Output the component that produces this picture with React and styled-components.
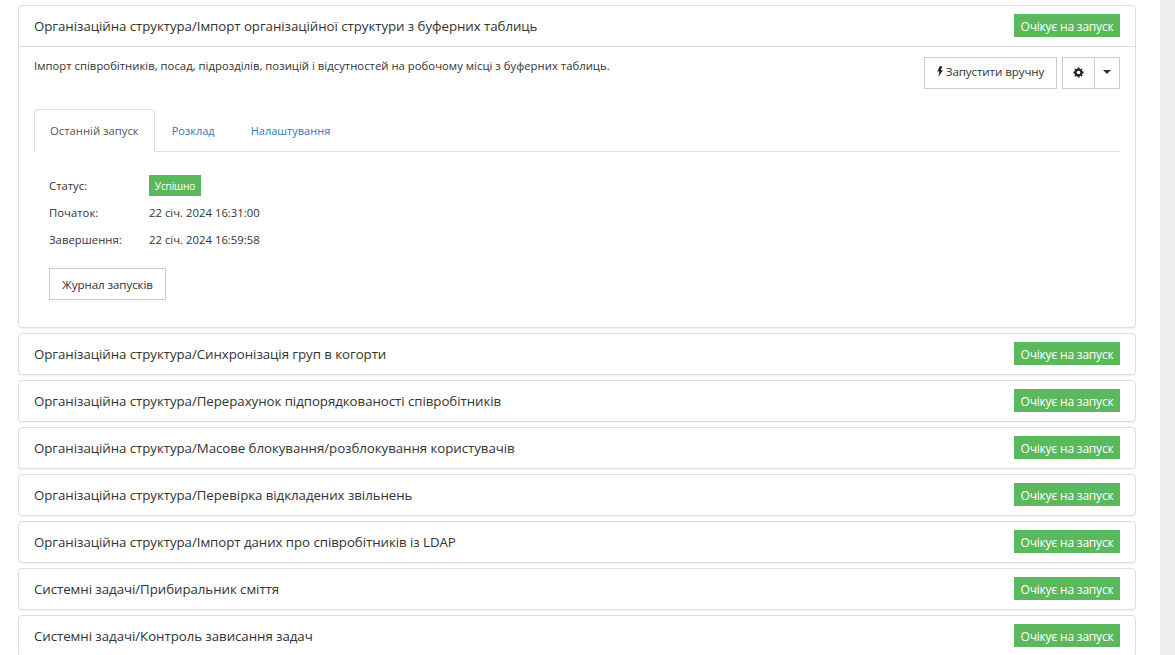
import React from "react";
import styled, { createGlobalStyle } from "styled-components";

const Global = createGlobalStyle`
  html, body { margin: 0; padding: 0; height: 100%; overflow: hidden; background: #fff; }
  body { font-family: "Open Sans", "Noto Sans", sans-serif; color: #333; }
  * { box-sizing: border-box; }
`;

const Page = styled.div`
  display: flex;
  width: 1175px;
  height: 655px;
  overflow: hidden;
`;
const Content = styled.main`
  width: 1160px;
  flex: none;
  padding: 5px 24px 0 18px;
  display: flex;
  flex-direction: column;
  gap: 5px;
`;
const Track = styled.div`
  width: 15px;
  flex: none;
  background: #ededed;
`;
const Panel = styled.section`
  flex: none;
  border: 1px solid #ddd;
  border-radius: 4px;
  background: #fff;
  box-shadow: 0 1px 1px rgba(0, 0, 0, 0.05);
`;
const Head = styled.header`
  height: ${(p) => (p.$open ? 41 : 40)}px;
  padding: 8px 15px 0;
  display: flex;
  align-items: flex-start;
  justify-content: space-between;
  border-bottom: ${(p) => (p.$open ? "1px solid #ddd" : "0")};
`;
const Title = styled.h3`
  margin: 3px 0 0;
  font-size: 13.3px;
  font-weight: 400;
  line-height: 18px;
  letter-spacing: -0.06px;
`;
const Badge = styled.span`
  display: inline-flex;
  align-items: center;
  justify-content: center;
  background: #5cb85c;
  color: #fff;
  font-size: ${(p) => (p.$small ? 10.2 : 12)}px;
  height: ${(p) => (p.$small ? 21 : 23)}px;
  width: ${(p) => (p.$small ? 52 : 106)}px;
  padding-top: ${(p) => (p.$small ? 0 : 1)}px;
  letter-spacing: -0.2px;
`;
const Body = styled.div`
  padding: 10px 15px 27px;
`;
const TopRow = styled.div`
  display: flex;
  justify-content: space-between;
  align-items: flex-start;
  height: 52px;
`;
const Desc = styled.p`
  margin: 0;
  font-size: 11.3px;
  line-height: 17px;
  letter-spacing: 0.02px;
`;
const Actions = styled.div`
  display: flex;
  gap: 5px;
`;
const Button = styled.button`
  height: 32px;
  background: #fff;
  border: 1px solid #ccc;
  color: #333;
  font: 400 11.6px "Open Sans", sans-serif;
  letter-spacing: -0.1px;
  padding: 0 0 ${(p) => p.$lift || 0}px;
  width: ${(p) => p.$w}px;
  display: inline-flex;
  align-items: center;
  justify-content: center;
  gap: 3px;
  margin-left: ${(p) => (p.$joined ? "-1px" : "0")};
`;
const Group = styled.div`
  display: flex;
`;
const Tabs = styled.nav`
  display: flex;
  height: 43px;
  border-bottom: 1px solid #ddd;
`;
const Tab = styled.a`
  height: 43px;
  display: flex;
  align-items: center;
  font-size: ${(p) => (p.$active ? 11.3 : 11)}px;
  padding: ${(p) => (p.$active ? "0 15px" : "0 19px 0 17px")};
  color: ${(p) => (p.$active ? "#555" : "#337ab7")};
  border: ${(p) => (p.$active ? "1px solid #ddd" : "0")};
  border-bottom: ${(p) => (p.$active ? "1px solid #fff" : "0")};
  border-radius: 4px 4px 0 0;
  background: ${(p) => (p.$active ? "#fff" : "transparent")};
`;
const Info = styled.dl`
  margin: 20px 0 0 15px;
  display: grid;
  grid-template-columns: 100px auto;
  grid-auto-rows: 27px;
  align-items: center;
  font-size: 11.3px;
  letter-spacing: 0.02px;
`;
const Label = styled.dt`
  margin: 0;
`;
const Value = styled.dd`
  margin: 0;
`;
const LogButton = styled(Button)`
  margin: 15px 0 0 15px;
`;
const BoltIcon = () => (
  <svg width="6" height="11" viewBox="0 0 7 12"><path d="M3.200 0h3L4.500 4.400H7L1.600 12l1.200-5.900H.4z" fill="#222" /></svg>
);
const GearIcon = () => (
  <svg width="11" height="11" viewBox="0 0 24 24"><path fill="#222" fillRule="evenodd" d="M10 1h4l.6 3.100 1.800.8L19 3.100 21 5l-1.800 2.700.8 1.800L23 10v4l-3 .6-.8 1.800L21 19l-2 2-2.600-1.800-1.800.8L14 23h-4l-.6-3-1.800-.8L5 21l-2-2 1.800-2.600-.8-1.800L1 14v-4l3-.5.8-1.800L3 5l2-1.900 2.600 1.800 1.800-.8zM12 8a4 4 0 1 0 0 8 4 4 0 0 0 0-8z" /></svg>
);
const Caret = () => (
  <svg width="8" height="4" viewBox="0 0 8 4"><path d="M0 0h8L4 4z" fill="#333" /></svg>
);

const rows = [
  "Організаційна структура/Синхронізація груп в когорти",
  "Організаційна структура/Перерахунок підпорядкованості співробітників",
  "Організаційна структура/Масове блокування/розблокування користувачів",
  "Організаційна структура/Перевірка відкладених звільнень",
  "Організаційна структура/Імпорт даних про співробітників із LDAP",
  "Системні задачі/Прибиральник сміття",
  "Системні задачі/Контроль зависання задач",
];

export default function App() {
  return (
    <Page>
      <Global />
      <Content>
        <Panel>
          <Head $open>
            <Title>Організаційна структура/Імпорт організаційної структури з буферних таблиць</Title>
            <Badge>Очікує на запуск</Badge>
          </Head>
          <Body>
            <TopRow>
              <Desc>Імпорт співробітників, посад, підрозділів, позицій і відсутностей на робочому місці з буферних таблиць.</Desc>
              <Actions>
                <Button $w={133} $lift={4}><BoltIcon />Запустити вручну</Button>
                <Group>
                  <Button $w={33} $lift={2}><GearIcon /></Button>
                  <Button $w={26} $joined $lift={2}><Caret /></Button>
                </Group>
              </Actions>
            </TopRow>
            <Tabs>
              <Tab $active>Останній запуск</Tab>
              <Tab>Розклад</Tab>
              <Tab>Налаштування</Tab>
            </Tabs>
            <Info>
              <Label>Статус:</Label><Value><Badge $small>Успішно</Badge></Value>
              <Label>Початок:</Label><Value>22 січ. 2024 16:31:00</Value>
              <Label>Завершення:</Label><Value>22 січ. 2024 16:59:58</Value>
            </Info>
            <LogButton $w={117}>Журнал запусків</LogButton>
          </Body>
        </Panel>
        {rows.map((r) => (
          <Panel key={r}>
            <Head>
              <Title>{r}</Title>
              <Badge>Очікує на запуск</Badge>
            </Head>
          </Panel>
        ))}
      </Content>
      <Track />
    </Page>
  );
}
